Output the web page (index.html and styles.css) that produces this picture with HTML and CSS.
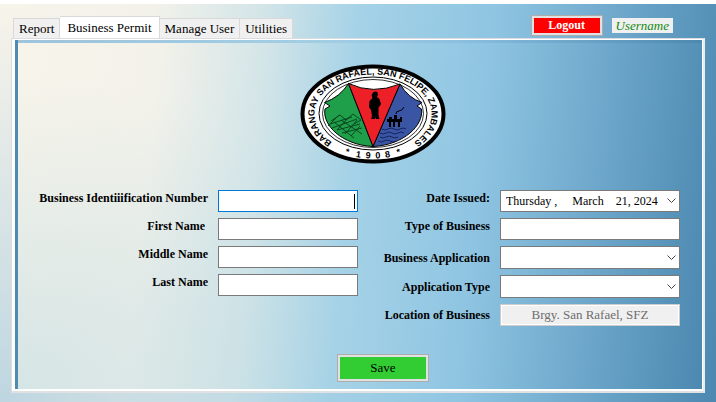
FILE: index.html
```html
<!DOCTYPE html>
<html lang="en">
<head>
<meta charset="utf-8">
<meta name="viewport" content="width=device-width, initial-scale=1">
<title>Business Permit</title>
<link rel="stylesheet" href="styles.css">
</head>
<body>
<div class="window">
  <header class="topbar">
    <nav class="tabs">
      <button class="tab" type="button">Report</button>
      <button class="tab tab-active" type="button">Business Permit</button>
      <button class="tab" type="button">Manage User</button>
      <button class="tab" type="button">Utilities</button>
    </nav>
    <div class="account">
      <button class="logout" type="button">Logout</button>
      <span class="username">Username</span>
    </div>
  </header>
  <main class="panel">
    <div class="page">
      <svg class="seal" width="146" height="100" viewBox="0 0 146 100" role="img" aria-label="Barangay seal">
        <defs>
          <path id="ring-top" d="M73 89.500A58.500 39.500 0 0 1 73 10.500A58.500 39.500 0 0 1 73 89.500"/>
          <path id="ring-bottom" d="M8 50A65 44.500 0 0 0 138 50"/>
        </defs>
        <ellipse cx="73" cy="50" rx="70.5" ry="47.5" fill="#fff" stroke="#000" stroke-width="4"/>
        <ellipse cx="73" cy="49.5" rx="54" ry="36.5" fill="#fff" stroke="#000"/>
        <ellipse cx="73" cy="49.5" rx="50.5" ry="34" fill="#fff" stroke="#000" stroke-width=".8"/>
        <path d="M48.500 19.500Q40 33 24.500 38.500L30 42L25 45C22 61 42 81 73 82.500Z" fill="#1f9f4a" stroke="#000"/>
        <path d="M100 20Q108 34 122 38.500L117 42L121.500 45C124 61 104 81 73 82.500Z" fill="#3b55a5" stroke="#000"/>
        <path d="M48.500 19.500Q73 31 100 20L73 82.500Z" fill="#ed2027" stroke="#000"/>
        <path d="M73 28.500q3-2 4.500 0q1 3-.5 4.500l2.500 2 1.500 5-2.500 4v7l1 4h-3.500v-2l-1 2h-4l1-3-1-6-2-3 .5-6 3-3-1-3z" fill="#000"/>
        <path d="M31 57l9-6 6 5 7-6 8 6-7 4M30 60l22-7M32 64l25-9M37 66l23-6M42 69l20-5M34 58l20 16M41 56l21 14M28 62l11-11M37 66l11-12M45 70l12-14M51 72l9-10" fill="none" stroke="#073d1b" stroke-width=".9"/>
        <path d="M89 63v-5h-2v-3h2v-2h3v2h2v-4h3v4h3v-2h2v5h-2v5h-2v-5h-3v5h-2v-5h-2v5z" fill="#000"/>
        <path d="M96 50q0-3 3-3t5-4" fill="none" stroke="#000"/>
        <path d="M82 65q3 2 6 0t6 0t6 0t6 0M80 69q3 2 6 0t6 0t6 0t6 0M80 73q3 2 6 0t6 0t6 0M78 77q3 2 6 0t6 0t6 0" fill="none" stroke="#101f59" stroke-width=".9"/>
        <text class="seal-text" text-anchor="middle"><textPath href="#ring-top" startOffset="50%">BARANGAY SAN RAFAEL, SAN FELIPE, ZAMBALES</textPath><textPath href="#ring-bottom" startOffset="50%">*&#160;&#160; 1&#160; 9&#160; 0&#160; 8 &#160;&#160;*</textPath></text>
      </svg>
      <form class="permit">
        <div class="fields fields-left">
          <label for="bin">Business Identiiification Number</label>
          <div class="box box-focus"><input id="bin" type="text"><span class="caret"></span></div>
          <label for="first">First Name&#160;</label>
          <div class="box"><input id="first" type="text"></div>
          <label for="middle">Middle Name</label>
          <div class="box"><input id="middle" type="text"></div>
          <label for="last">Last Name</label>
          <div class="box"><input id="last" type="text"></div>
        </div>
        <div class="fields fields-right">
          <label for="date">Date Issued:</label>
          <div class="box"><select id="date"><option>Thursday ,&#160;&#160;&#160;&#160; March&#160;&#160;&#160; 21, 2024</option></select><svg class="chevron" width="9" height="6" viewBox="0 0 9 6"><path d="M.5.500l4 4 4-4"/></svg></div>
          <label for="type">Type of Business</label>
          <div class="box"><input id="type" type="text"></div>
          <label class="mid" for="application">Business Application</label>
          <div class="box box-tall"><select id="application"><option></option></select><svg class="chevron" width="9" height="6" viewBox="0 0 9 6"><path d="M.5.500l4 4 4-4"/></svg></div>
          <label class="mid" for="apptype">Application Type</label>
          <div class="box box-tall"><select id="apptype"><option></option></select><svg class="chevron" width="9" height="6" viewBox="0 0 9 6"><path d="M.5.500l4 4 4-4"/></svg></div>
          <label class="mid" for="location">Location of Business</label>
          <div class="box box-disabled"><input id="location" type="text" value="Brgy. San Rafael, SFZ" disabled></div>
        </div>
        <div class="actions"><button class="save" type="submit">Save</button></div>
      </form>
    </div>
  </main>
</div>
</body>
</html>
```
FILE: styles.css
```css
* { box-sizing: border-box; }

body {
  margin: 0;
  font-family: "Liberation Serif", "Times New Roman", serif;
  font-size: 13px;
  color: #000;
}

button, input, select { font: inherit; color: inherit; }

.window {
  display: flex;
  flex-direction: column;
  min-height: 100vh;
  padding: 11px 11px 9px;
  border-top: 4px solid #fff;
  background:
    radial-gradient(ellipse 60% 100% at 0 100%, rgba(160, 198, 220, 0.65), rgba(160, 198, 220, 0)),
    linear-gradient(95deg, #f7f4ea 0%, #f3f2ea 20%, #d3e5e8 35%, #a5d2e7 48%, #8fc5e2 66%, #6ba5c9 84%, #4c88b0 100%);
}

.topbar {
  display: flex;
  justify-content: space-between;
  align-items: flex-start;
  height: 23px;
}

.tabs {
  display: flex;
  align-items: flex-end;
  height: 24px;
  padding-left: 2px;
}

.tab {
  height: 21px;
  padding: 0 5px;
  border: 1px solid #d9d9d9;
  border-left-width: 0;
  background: #f0f0f0;
  line-height: 19px;
}

.tab:first-child { border-left-width: 1px; }

.tab-active {
  height: 23px;
  padding: 0 7px 2px;
  border-bottom: 0;
  background: #fff;
}

.account {
  display: flex;
  align-items: center;
  gap: 9px;
  padding-right: 32px;
}

.logout {
  width: 72px;
  height: 21px;
  padding: 0;
  border: 1px solid #adadad;
  box-shadow: inset 0 0 0 2px #e1e1e1;
  background: #f00;
  color: #fff;
  font-weight: bold;
  font-size: 12px;
  line-height: 17px;
}

.username {
  padding: 0 4px;
  background: #f0f0f0;
  color: #128a12;
  font-style: italic;
  line-height: 15px;
}

.panel {
  display: flex;
  flex: 1;
  border: 1px solid #dcdce0;
  border-right: 2px solid #e9edf0;
  border-bottom: 2px solid #dfe1e3;
}

.page {
  flex: 1;
  display: flex;
  flex-direction: column;
  align-items: center;
  padding: 24px 0 7px;
  border: 1px solid #fff;
  border-left-width: 3px;
  border-bottom-width: 2px;
  background:
    linear-gradient(#4d8bb3, #4d8bb3) left / 3px 100% no-repeat,
    linear-gradient(to right, #9dc4dc, #a2cee4 45%, #8abfdf 65%, #4c88b0) top / 100% 3px no-repeat,
    radial-gradient(ellipse 60% 90% at 0 100%, rgba(180, 214, 224, 0.5), rgba(180, 214, 224, 0)),
    linear-gradient(95deg, #f7f4ea 0%, #f3f2ea 20%, #d3e5e8 35%, #a5d2e7 48%, #8fc5e2 66%, #6ba5c9 84%, #4c88b0 100%);
}

.seal { margin-left: 28px; }

.seal-text {
  font-family: "Liberation Sans", Arial, sans-serif;
  font-weight: bold;
  font-size: 9px;
}

.permit {
  display: grid;
  grid-template-columns: 340fr 322fr;
  width: 100%;
  padding: 26px 22px 0 3px;
}

.fields {
  display: grid;
  gap: 6px 10px;
  align-content: start;
}

.fields-left { grid-template-columns: 1fr 140px; }
.fields-right { grid-template-columns: 1fr 180px; }

label {
  font-weight: bold;
  font-size: 12px;
  line-height: 16px;
  text-align: right;
}

.mid { align-self: center; }

.box {
  display: flex;
  align-items: center;
  height: 22px;
  border: 1px solid #7a7a7a;
  background: #fff;
}

.box-tall { height: 23px; }
.box-focus { border-color: #0078d7; }

.box input, .box select {
  flex: 1;
  min-width: 0;
  height: 100%;
  padding: 0 5px;
  border: 0;
  outline: 0;
  background: transparent;
  appearance: none;
}

.box select { font-size: 12px; }

.chevron {
  flex: none;
  margin-right: 3px;
  fill: none;
  stroke: #444;
}

.caret {
  width: 1px;
  height: 15px;
  margin-right: 2px;
  background: #000;
}

.box-disabled {
  border-color: #ccc;
  box-shadow: inset 0 0 0 1px #fff;
  background: #f0f0f0;
  color: #6d6d6d;
}

.box-disabled input { text-align: center; }

.actions {
  grid-column: 1 / -1;
  display: flex;
  justify-content: center;
  padding: 28px 0 0 68px;
}

.save {
  width: 92px;
  height: 28px;
  padding: 0;
  border: 1px solid #adadad;
  box-shadow: inset 0 0 0 2px #e1e1e1;
  background: #32cd32;
}
```
